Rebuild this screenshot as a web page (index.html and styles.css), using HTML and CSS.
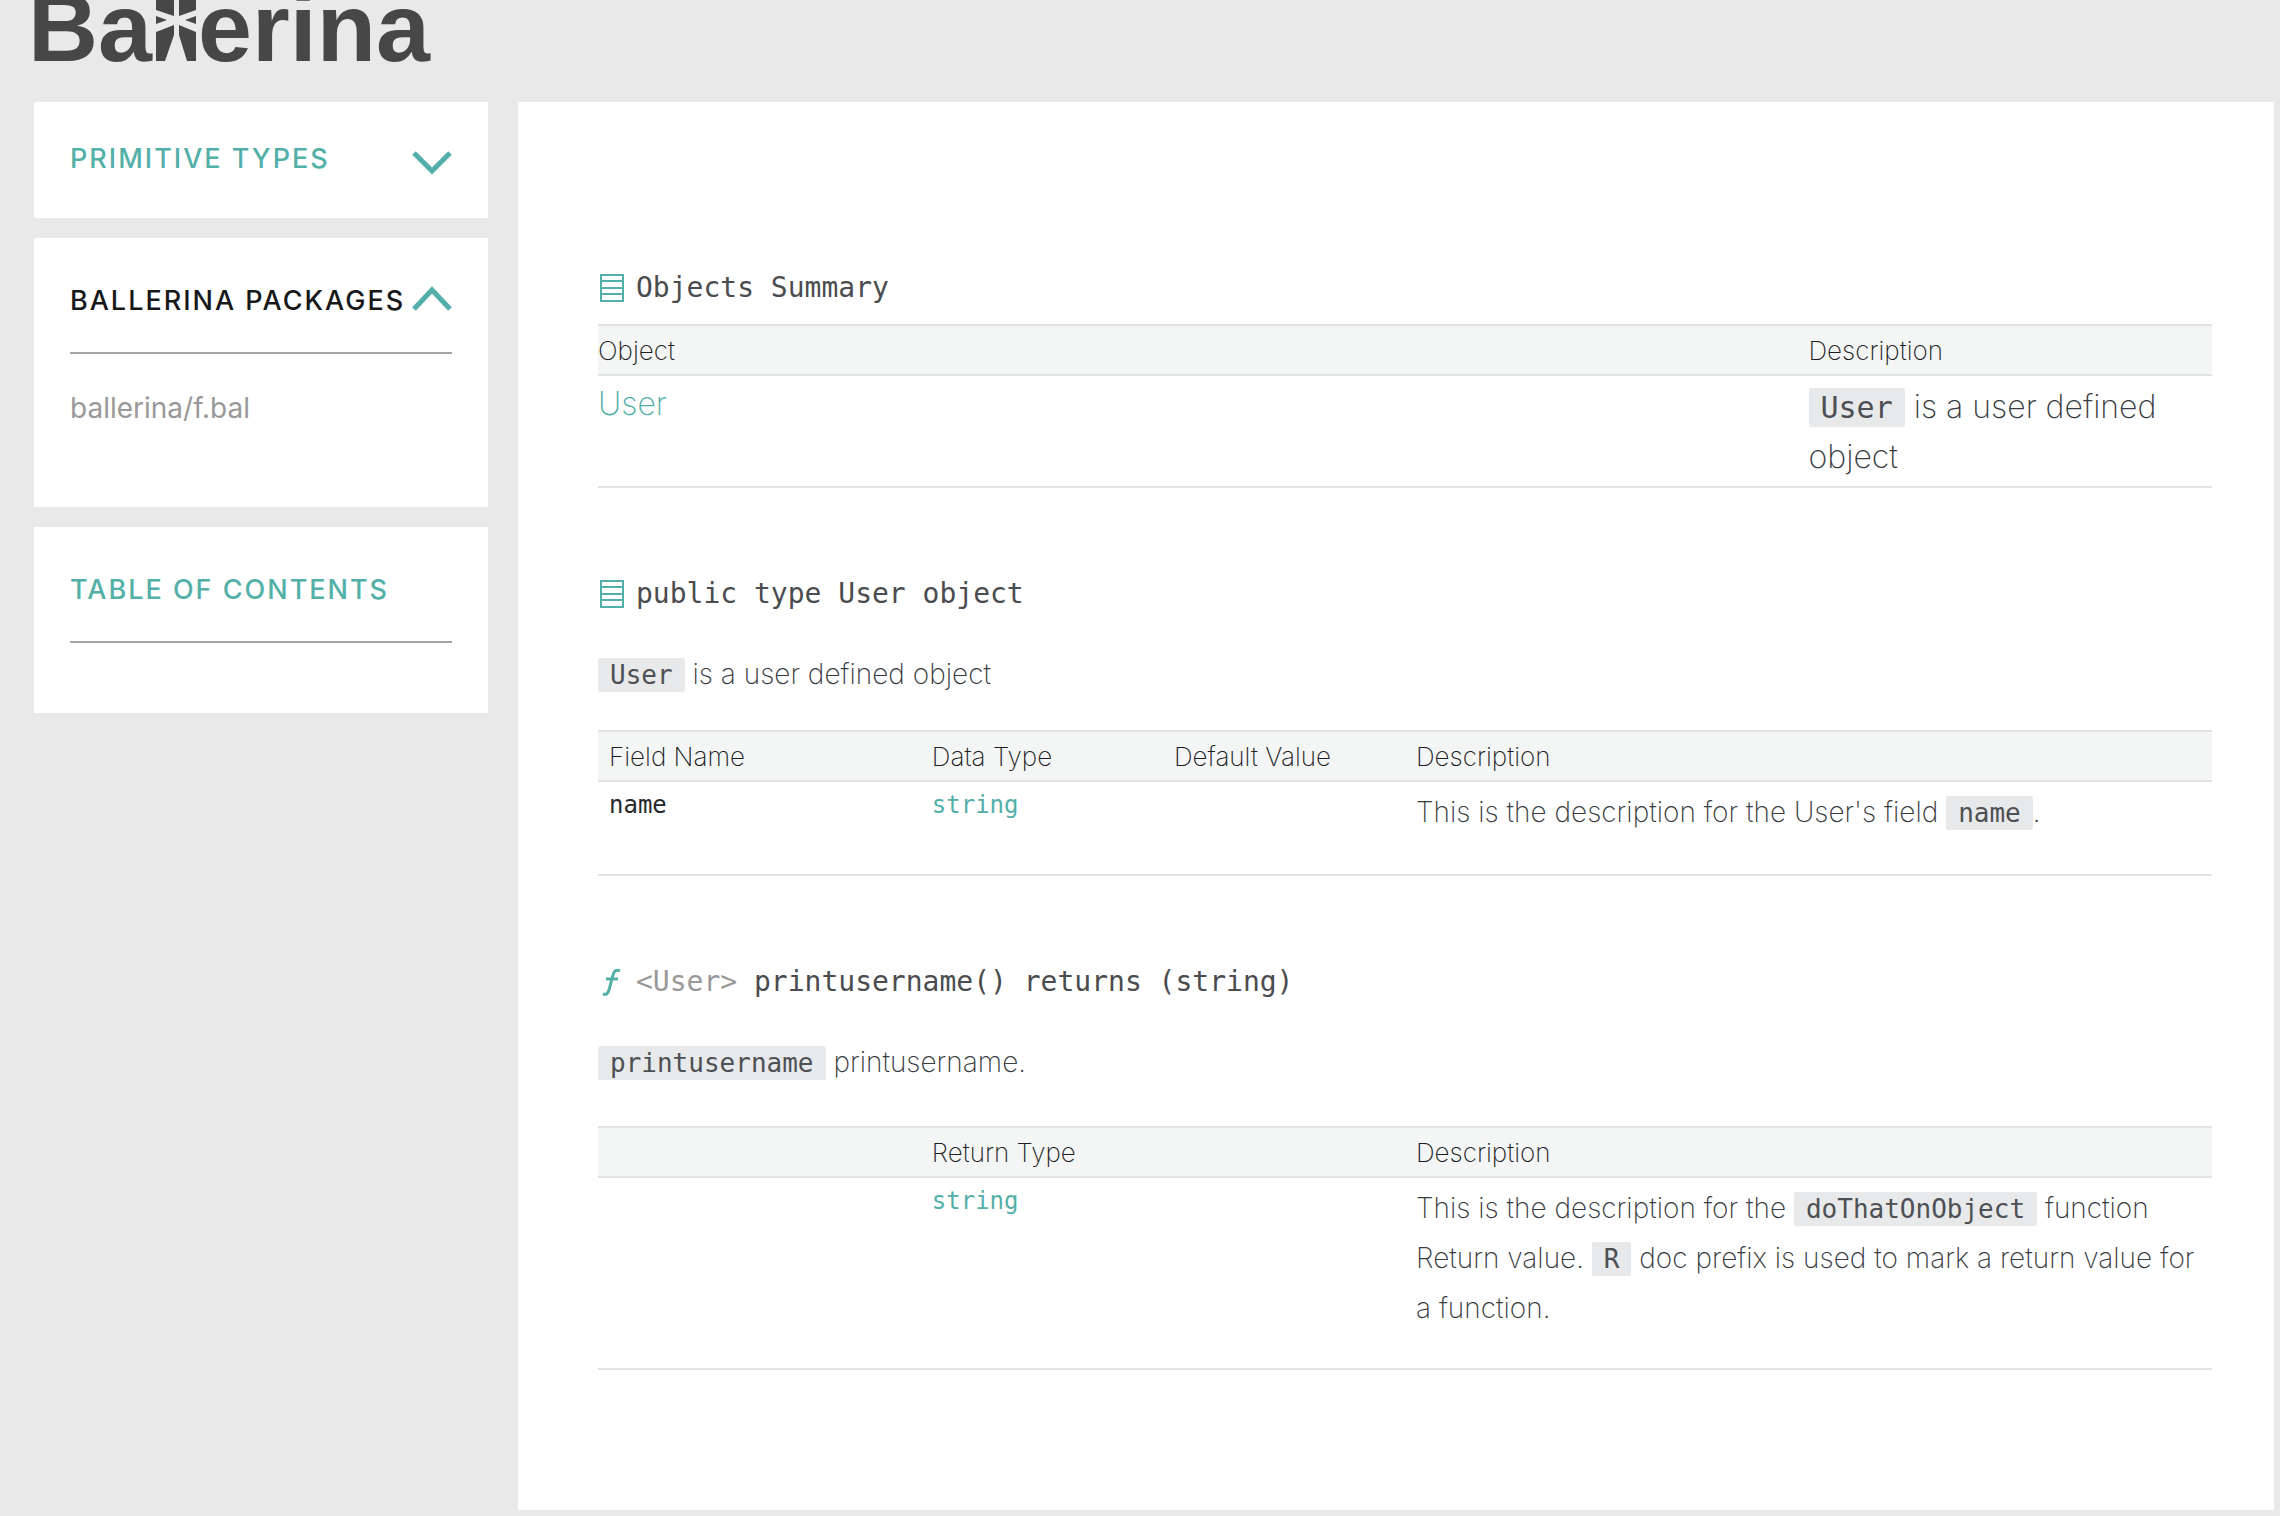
FILE: index.html
```html
<!DOCTYPE html>
<html lang="en">
<head>
<meta charset="utf-8">
<meta name="viewport" content="width=device-width, initial-scale=1">
<title>Ballerina API documentation</title>
<link rel="stylesheet" href="styles.css">
</head>
<body>
<header class="site-header">
  <a class="logo" href="#" aria-label="Ballerina">
    <span>Ba</span>
    <svg class="logo-mark" viewBox="0 -10 40 70" aria-hidden="true">
      <path d="M0-10H18V15L0 9ZM0 15 11 19 0 23ZM0 31 18 24V34L9 60H0ZM40-10H23V15L40 9ZM40 15 29 19 40 23ZM40 31 23 24V34L31 60H40Z"/>
    </svg>
    <span>erina</span>
  </a>
</header>

<div class="layout">
  <nav class="sidebar" aria-label="Documentation">
    <section class="card card-collapsed">
      <button class="card-title" type="button" aria-expanded="false">
        Primitive Types
        <svg class="chevron" viewBox="0 0 40 32" aria-hidden="true"><path d="M2 10 20 28 38 10"/></svg>
      </button>
    </section>
    <section class="card">
      <button class="card-title card-title-active" type="button" aria-expanded="true">
        Ballerina Packages
        <svg class="chevron" viewBox="0 0 40 32" aria-hidden="true"><path d="M2 24 20 5 38 24"/></svg>
      </button>
      <ul class="package-list">
        <li><a class="package-link" href="#">ballerina/f.bal</a></li>
      </ul>
    </section>
    <section class="card">
      <h2 class="card-title">Table of Contents</h2>
    </section>
  </nav>

  <main class="content">
    <section class="entry">
      <h2 class="entry-title">
        <svg class="entry-icon" viewBox="0 0 24 28" aria-hidden="true"><path d="M1 1H23V27H1ZM1 7H23M1 14H23M1 20H23"/></svg>
        Objects Summary
      </h2>
      <table class="doc-table summary-table">
        <colgroup><col class="w-75"><col class="w-25"></colgroup>
        <thead>
          <tr><th scope="col">Object</th><th scope="col">Description</th></tr>
        </thead>
        <tbody>
          <tr>
            <td><a class="object-link" href="#user">User</a></td>
            <td><code>User</code> is a user defined object</td>
          </tr>
        </tbody>
      </table>
    </section>

    <section class="entry" id="user">
      <h2 class="entry-title">
        <svg class="entry-icon" viewBox="0 0 24 28" aria-hidden="true"><path d="M1 1H23V27H1ZM1 7H23M1 14H23M1 20H23"/></svg>
        public type User object
      </h2>
      <p class="entry-text"><code>User</code> is a user defined object</p>
      <table class="doc-table">
        <colgroup><col class="w-20"><col class="w-15"><col class="w-15"><col class="w-50"></colgroup>
        <thead>
          <tr><th scope="col">Field Name</th><th scope="col">Data Type</th><th scope="col">Default Value</th><th scope="col">Description</th></tr>
        </thead>
        <tbody>
          <tr>
            <td class="field-name">name</td>
            <td class="field-type"><a href="#">string</a></td>
            <td></td>
            <td>This is the description for the User's field <code>name</code>.</td>
          </tr>
        </tbody>
      </table>
    </section>

    <section class="entry entry-function">
      <h2 class="entry-title">
        <svg class="entry-icon icon-function" viewBox="0 0 24 28" aria-hidden="true"><path d="M20 3C16 1 14 3 13 7L9 22C8 26 6 27 3 26M6 11H18"/></svg>
        <span><span class="receiver">&lt;User&gt;</span> printusername() returns (string)</span>
      </h2>
      <p class="entry-text"><code>printusername</code> printusername.</p>
      <table class="doc-table">
        <colgroup><col class="w-20"><col class="w-15"><col class="w-15"><col class="w-50"></colgroup>
        <thead>
          <tr><td></td><th scope="col">Return Type</th><td></td><th scope="col">Description</th></tr>
        </thead>
        <tbody>
          <tr>
            <td></td>
            <td class="field-type"><a href="#">string</a></td>
            <td></td>
            <td>This is the description for the <code>doThatOnObject</code> function Return value. <code>R</code> doc prefix is used to mark a return value for a function.</td>
          </tr>
        </tbody>
      </table>
    </section>
  </main>
</div>
</body>
</html>
```
FILE: styles.css
```css
:root {
  --teal: #53b0a8;
  --ink: #4b4c4f;
  --page: #e9e9e9;
  --line: #e2e3e3;
  --sans: Inter, "Liberation Sans", sans-serif;
  --mono: "DejaVu Sans Mono", monospace;
}

* {
  box-sizing: border-box;
}

body {
  margin: 0;
  background: var(--page);
  color: #3a3c3f;
  font-family: var(--sans);
  font-size: 28px;
  font-weight: 200;
  line-height: 50px;
}

a {
  color: var(--teal);
  text-decoration: none;
}

h2,
p,
ul {
  margin: 0;
  padding: 0;
}

/* The header is tucked under the top edge of the window */
.site-header {
  margin-top: -20px;
  padding: 0 28px 26px;
}

.logo {
  display: flex;
  align-items: baseline;
  color: #474747;
  font: bold 97px/96px "Liberation Sans", sans-serif;
}

.logo-mark {
  width: 40px;
  height: 70px;
  margin: 0 2px 0 4px;
  fill: currentColor;
}

.layout {
  display: grid;
  grid-template-columns: minmax(0, 454px) minmax(0, 1fr);
  gap: 30px;
  padding: 0 6px 6px 34px;
}

/* Sidebar */
.sidebar {
  display: flex;
  flex-direction: column;
  gap: 20px;
}

.card {
  padding: 43px 36px 70px;
  background: #fff;
}

.card-collapsed {
  padding: 37px 36px 39px;
}

.card-title {
  display: flex;
  align-items: center;
  justify-content: space-between;
  width: 100%;
  padding: 0 0 31px;
  border: 0;
  border-bottom: 2px solid #a3a4a4;
  background: none;
  color: var(--teal);
  font: 500 27px/40px var(--sans);
  letter-spacing: 2px;
  text-align: left;
  text-transform: uppercase;
  white-space: nowrap;
}

button.card-title {
  cursor: pointer;
}

.card-collapsed .card-title {
  padding: 0;
  border-bottom: 0;
}

.card-title-active {
  color: #17181a;
}

.chevron {
  flex: none;
  width: 40px;
  height: 32px;
  fill: none;
  stroke: var(--teal);
  stroke-width: 5;
}

.package-list {
  padding: 34px 0 9px;
  list-style: none;
  line-height: 40px;
}

.package-link {
  color: #999;
  font-weight: 400;
}

/* Documentation */
.content {
  padding: 164px 62px 140px 80px;
  background: #fff;
}

.entry + .entry {
  margin-top: 84px;
}

.entry-title {
  display: flex;
  align-items: center;
  gap: 12px;
  padding-left: 2px;
  margin-bottom: 14px;
  color: var(--ink);
  font: 400 28px/44px var(--mono);
}

.entry-icon {
  flex: none;
  width: 24px;
  height: 28px;
  fill: none;
  stroke: var(--teal);
  stroke-width: 2;
}

.icon-function {
  stroke-width: 3;
}

.receiver {
  color: #999;
}

.entry-text {
  margin: 33px 0 31px;
}

.entry-function .entry-text {
  margin-bottom: 39px;
}

code {
  padding: 2px 12px;
  border-radius: 2px;
  background: #e8e9ea;
  color: #4d5054;
  font: 400 26px/26px var(--mono);
}

.doc-table {
  width: 100%;
  border-collapse: separate;
  border-spacing: 0;
  table-layout: fixed;
}

.w-15 { width: 15%; }
.w-20 { width: 20%; }
.w-25 { width: 25%; }
.w-50 { width: 50%; }
.w-75 { width: 75%; }

.doc-table thead > tr > * {
  padding: 5px 11px 3px;
  border-top: 2px solid var(--line);
  border-bottom: 2px solid var(--line);
  background: #f4f5f5;
  color: #1c1d1f;
  font-size: 26px;
  font-weight: 200;
  line-height: 40px;
  text-align: left;
}

.doc-table tbody td {
  padding: 5px 8px 37px 11px;
  border-bottom: 2px solid var(--line);
  vertical-align: top;
}

.entry-function .doc-table tbody td {
  padding-bottom: 35px;
}

.doc-table .field-name,
.doc-table .field-type {
  font: 400 24px/36px var(--mono);
}

.field-name {
  color: #26282a;
}

.doc-table.summary-table thead > tr > th {
  padding: 5px 0 3px;
}

.doc-table.summary-table tbody td {
  padding: 6px 0 4px;
  font-size: 32px;
}

.summary-table code {
  font-size: 30px;
}

.object-link {
  display: block;
  line-height: 44px;
}
```
